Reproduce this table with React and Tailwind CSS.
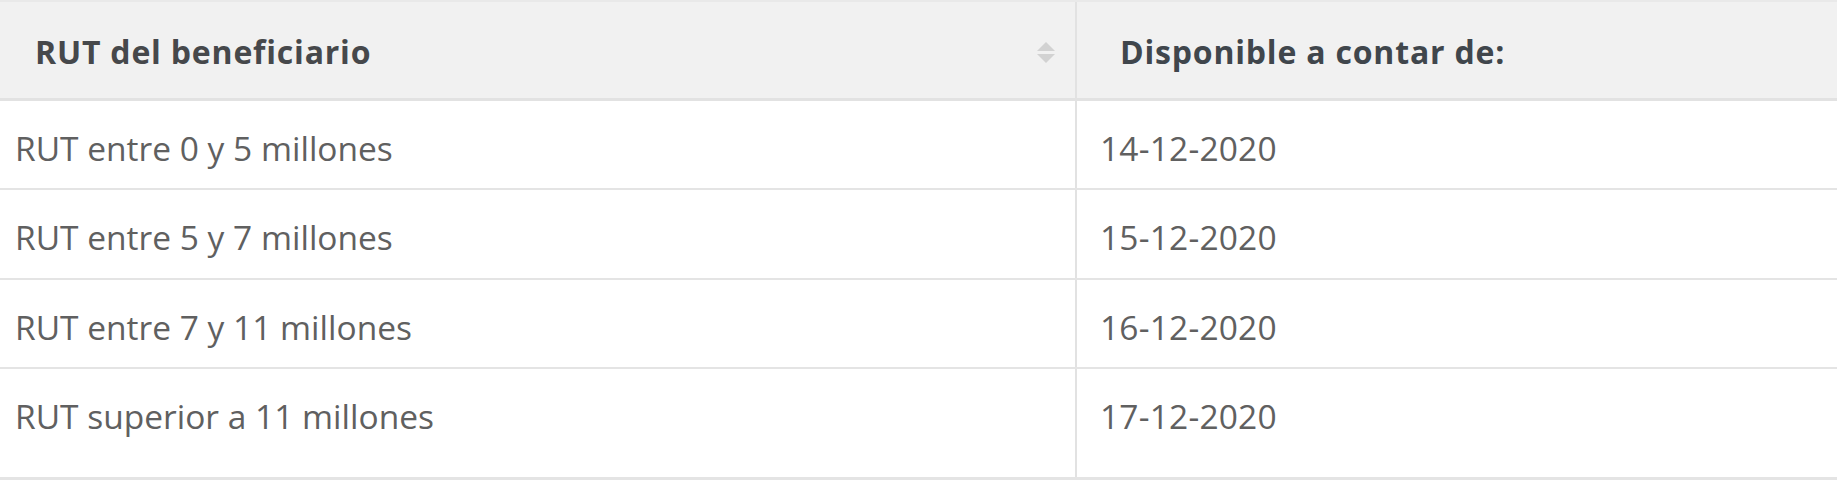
export default function App() {
  const rows = [
    { rango: "RUT entre 0 y 5 millones", fecha: "14-12-2020", h: "h-[89px]" },
    { rango: "RUT entre 5 y 7 millones", fecha: "15-12-2020", h: "h-[90px]" },
    { rango: "RUT entre 7 y 11 millones", fecha: "16-12-2020", h: "h-[89px]" },
    { rango: "RUT superior a 11 millones", fecha: "17-12-2020", h: "h-[111px]" },
  ];

  return (
    <div className="w-[1837px] h-[480px] overflow-hidden bg-white" style={{ fontFamily: "'Open Sans', 'Liberation Sans', sans-serif" }}>
      <div className="border-t-2 border-[#e9e9e9]">
        {/* Header */}
        <div className="grid grid-cols-[1077px_1fr] h-[99px] bg-[#f1f1f1] border-b-[3px] border-[#e2e2e2]">
          <div className="flex items-center justify-between pt-[4px] pl-[35px] pr-[18px] border-r-2 border-[#e2e2e2]">
            <span className="text-[32px] font-bold tracking-[0.8px] text-[#46484b]">RUT del beneficiario</span>
            <svg width="22" height="22" viewBox="0 0 22 22" className="text-[#d2d2d2]">
              <path d="M11 1 L20 10 H2 Z" fill="currentColor" />
              <path d="M11 22 L20 13 H2 Z" fill="currentColor" />
            </svg>
          </div>
          <div className="flex items-center pt-[4px] pl-[43px]">
            <span className="text-[32px] font-bold tracking-[0.8px] text-[#40464c]">Disponible a contar de:</span>
          </div>
        </div>

        {/* Body */}
        {rows.map((r, i) => (
          <div
            key={r.fecha}
            className={`grid grid-cols-[1077px_1fr] ${r.h} ${i < rows.length - 1 ? "border-b-2" : "border-b-[3px]"} border-[#e4e4e4]`}
          >
            <div className="flex items-start pt-[22px] pl-[15px] border-r-2 border-[#e2e2e2]">
              <span className="text-[33.5px] text-[#606060]">{r.rango}</span>
            </div>
            <div className="flex items-start pt-[22px] pl-[23px]">
              <span className="text-[33.5px] tracking-[0.2px] text-[#606060]">{r.fecha}</span>
            </div>
          </div>
        ))}
      </div>
    </div>
  );
}
